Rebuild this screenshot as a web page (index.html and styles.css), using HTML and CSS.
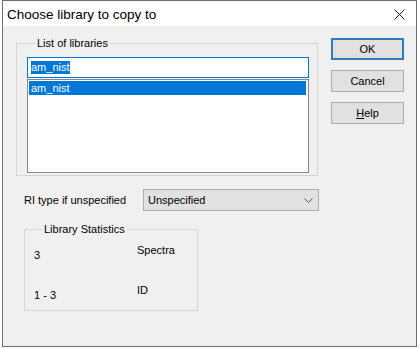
FILE: index.html
```html
<!DOCTYPE html>
<html lang="en">
<head>
<meta charset="utf-8">
<title>Choose library to copy to</title>
<link rel="stylesheet" href="styles.css">
</head>
<body>
<div class="window">
  <div class="titlebar">
    <span class="title">Choose library to copy to</span>
    <svg class="close" width="11" height="11" viewBox="0 0 11 11"><path d="M0.5 0.5 L10.5 10.5 M10.5 0.5 L0.5 10.5" stroke="#1a1a1a" stroke-width="1" fill="none"/></svg>
  </div>
  <div class="body">
    <div class="left">
      <fieldset class="group libs">
        <legend>List of libraries</legend>
        <div class="edit"><span class="sel">am_nist</span></div>
        <div class="listbox"><div class="item selected">am_nist</div></div>
      </fieldset>
      <div class="ri-row">
        <span class="ri-label">RI type if unspecified</span>
        <div class="combo">
          <span>Unspecified</span>
          <svg class="chev" width="9" height="5" viewBox="0 0 9 5"><path d="M0.5 0.5 L4.5 4.5 L8.5 0.5" stroke="#555" stroke-width="1" fill="none"/></svg>
        </div>
      </div>
      <fieldset class="group stats">
        <legend>Library Statistics</legend>
        <div class="stats-grid">
          <span class="num">3</span><span class="lbl">Spectra</span>
          <span class="num">1 - 3</span><span class="lbl">ID</span>
        </div>
      </fieldset>
    </div>
    <div class="buttons">
      <button class="btn default">OK</button>
      <button class="btn">Cancel</button>
      <button class="btn"><u>H</u>elp</button>
    </div>
  </div>
</div>
</body>
</html>
```

FILE: styles.css
```css
html, body {
  margin: 0;
  padding: 0;
}
body {
  width: 419px;
  height: 349px;
  background: #ffffff;
  overflow: hidden;
  font-family: "Liberation Sans", Arial, sans-serif;
  font-size: 11px;
  color: #000;
}
.window {
  margin-left: 2px;
  width: 415px;
  height: 347px;
  box-sizing: border-box;
  border: 1px solid #6e6e6e;
  background: #f0f0f0;
  display: flex;
  flex-direction: column;
}
.titlebar {
  height: 25px;
  background: #ffffff;
  display: flex;
  align-items: center;
  justify-content: space-between;
  padding: 0 11px 0 4px;
}
.title {
  font-family: "Liberation Sans", Arial, sans-serif;
  font-size: 13.5px;
  color: #000;
  margin-top: 1px;
}
.close {
  display: block;
  margin-top: 1px;
}
.body {
  display: flex;
  align-items: flex-start;
}
.left {
  width: 316px;
  display: flex;
  flex-direction: column;
  align-items: flex-start;
}
.group {
  margin: 0;
  box-sizing: border-box;
  border: 1px solid #d5d5d5;
  padding: 0;
  min-width: 0;
}
.group legend {
  font-size: 11px;
  line-height: 12px;
  padding: 0 2px;
  margin-left: 8px;
}
.libs {
  margin-top: 11px;
  margin-left: 13px;
  width: 302px;
  height: 139px;
  padding: 8px 0 0 10px;
}
.edit {
  width: 282px;
  height: 21px;
  box-sizing: border-box;
  border: 1px solid #0078d7;
  background: #fff;
  padding-left: 3px;
  display: flex;
  align-items: center;
}
.sel {
  background: #0078d7;
  color: #fff;
  line-height: 13px;
}
.listbox {
  margin-top: 1px;
  width: 282px;
  height: 94px;
  box-sizing: border-box;
  border: 1px solid #828790;
  background: #fff;
  padding: 1px;
}
.item {
  height: 14px;
  line-height: 14px;
  padding-left: 2px;
  margin-right: 1px;
}
.item.selected {
  background: #0078d7;
  color: #fff;
}
.ri-row {
  margin-top: 13px;
  margin-left: 21px;
  display: flex;
  align-items: center;
}
.ri-label {
  width: 119px;
}
.combo {
  width: 176px;
  height: 22px;
  box-sizing: border-box;
  border: 1px solid #adadad;
  background: #e1e1e1;
  display: flex;
  align-items: center;
  justify-content: space-between;
  padding: 0 5px 0 4px;
}
.chev {
  display: block;
}
.stats {
  margin-top: 12px;
  margin-left: 21px;
  width: 174px;
  height: 88px;
  padding: 9px 0 0 9px;
}
.stats-grid {
  display: grid;
  grid-template-columns: 103px auto;
  grid-auto-rows: 13px;
  row-gap: 27px;
  line-height: 13px;
}
.num {
  padding-top: 5px;
}
.buttons {
  margin-left: 12px;
  margin-top: 12px;
  display: flex;
  flex-direction: column;
  gap: 10px;
}
.btn {
  width: 73px;
  height: 22px;
  box-sizing: border-box;
  border: 1px solid #adadad;
  background: #e1e1e1;
  font-family: "Liberation Sans", Arial, sans-serif;
  font-size: 11px;
  color: #000;
  padding: 0;
  margin: 0;
}
.btn.default {
  border: 2px solid #2f7bbd;
}
.btn u {
  text-decoration: underline;
}
```
